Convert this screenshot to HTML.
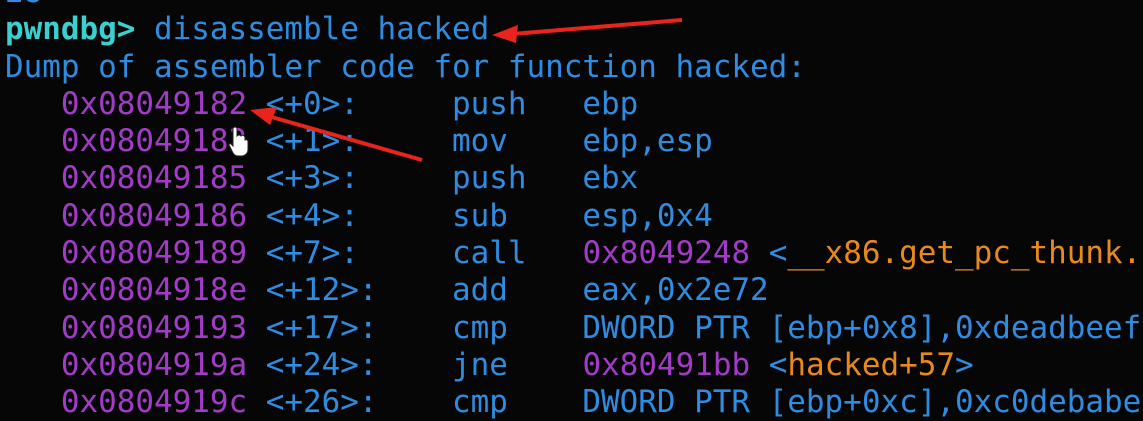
<!DOCTYPE html>
<html><head><meta charset="utf-8"><style>
html,body{margin:0;padding:0;background:#060607;width:1143px;height:421px;overflow:hidden;position:relative}
pre{position:absolute;left:5px;top:-26px;margin:0;font-family:"DejaVu Sans Mono","Liberation Mono",monospace;font-size:30.95px;line-height:37.3px;color:#2f8ce0;white-space:pre}
.p{color:#3ccfd0;font-weight:bold}
.a{color:#a23cc8}
.o{color:#e8891e}
svg{position:absolute;left:0;top:0}
</style></head><body>
<pre><span style="color:#2f8ce0">28</span>
<span class="p">pwndbg&gt;</span> disassemble hacked
Dump of assembler code for function hacked:
   <span class="a">0x08049182</span> &lt;+0&gt;:     push   ebp
   <span class="a">0x08049183</span> &lt;+1&gt;:     mov    ebp,esp
   <span class="a">0x08049185</span> &lt;+3&gt;:     push   ebx
   <span class="a">0x08049186</span> &lt;+4&gt;:     sub    esp,0x4
   <span class="a">0x08049189</span> &lt;+7&gt;:     call   <span class="a">0x8049248</span> &lt;<span class="o">__x86.get_pc_thunk.ax</span>&gt;
   <span class="a">0x0804918e</span> &lt;+12&gt;:    add    eax,0x2e72
   <span class="a">0x08049193</span> &lt;+17&gt;:    cmp    DWORD PTR [ebp+0x8],0xdeadbeef
   <span class="a">0x0804919a</span> &lt;+24&gt;:    jne    <span class="a">0x80491bb</span> &lt;<span class="o">hacked+57</span>&gt;
   <span class="a">0x0804919c</span> &lt;+26&gt;:    cmp    DWORD PTR [ebp+0xc],0xc0debabe</pre>
<svg width="1143" height="421">
<line x1="682" y1="20" x2="512" y2="34" stroke="#e8241c" stroke-width="4"/>
<polygon points="492,35 518,25 516,43" fill="#e8241c"/>
<line x1="422" y1="160" x2="268" y2="116" stroke="#e8241c" stroke-width="4"/>
<polygon points="250,110 277,107 270,125" fill="#e8241c"/>
<path d="M233 128 q2 -2 4 0 l0 8 q2 -2 4 0 q2 -2 4 1 l0 3 q2 -1 3 1 l0 8 q0 6 -6 7 l-4 0 q-4 0 -6 -5 l-3 -6 q0 -2 2 -1 l2 2 z" fill="#fff" stroke="#222" stroke-width="1"/>
</svg>
</body></html>
